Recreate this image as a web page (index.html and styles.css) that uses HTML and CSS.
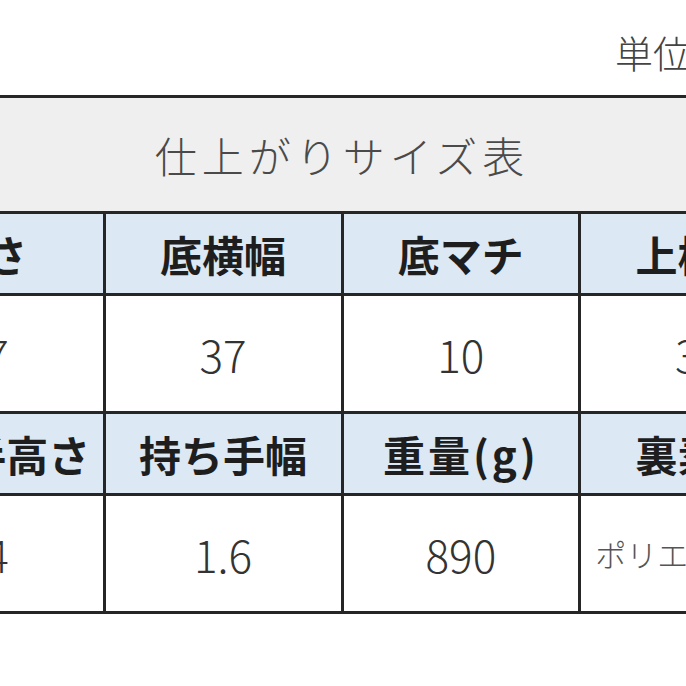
FILE: index.html
```html
<!DOCTYPE html>
<html lang="ja">
<head>
<meta charset="utf-8">
<link rel="stylesheet" href="styles.css">
</head>
<body>
<div class="page">
  <div class="unit">単位：cm</div>
  <table class="size">
    <colgroup><col><col><col><col></colgroup>
    <tr class="title"><td colspan="4">仕上がりサイズ表</td></tr>
    <tr class="head"><td>高さ</td><td>底横幅</td><td>底マチ</td><td>上横幅</td></tr>
    <tr class="data"><td>27</td><td>37</td><td>10</td><td>39</td></tr>
    <tr class="head"><td>持ち手高さ</td><td>持ち手幅</td><td class="wt">重量(g)</td><td>裏素材</td></tr>
    <tr class="data"><td>24</td><td>1.6</td><td>890</td><td class="small">ポリエステル</td></tr>
  </table>
</div>
</body>
</html>
```
FILE: styles.css
```css
html, body {
  margin: 0;
  padding: 0;
  background: #ffffff;
}
.page {
  width: 686px;
  height: 686px;
  overflow: hidden;
  font-family: "Noto Sans CJK JP", "Noto Sans", sans-serif;
}
.unit {
  height: 95px;
  box-sizing: border-box;
  padding: 24px 0 0 615px;
  font-size: 38px;
  font-weight: 300;
  line-height: 56px;
  color: #444;
  white-space: nowrap;
}
.size {
  margin-left: -135px;
  width: 954px;
  table-layout: fixed;
  border-collapse: collapse;
}
.size td {
  border: 3px solid #262626;
  text-align: center;
  padding: 0;
  white-space: nowrap;
  overflow: hidden;
}
.title td {
  height: 113px;
  background: #efefef;
  color: #4a4a4a;
  font-size: 42px;
  font-weight: 300;
  letter-spacing: 5px;
}
.head td {
  height: 79px;
  background: #dce8f4;
  color: #1e1e1e;
  font-size: 42px;
  font-weight: 700;
}
.head td.wt {
  letter-spacing: 3px;
}
.data td {
  height: 115px;
  background: #ffffff;
  color: #333;
  font-size: 44px;
  font-weight: 300;
}
.data td.small {
  font-size: 31px;
  text-align: left;
  padding-left: 14px;
  color: #555;
}
```
